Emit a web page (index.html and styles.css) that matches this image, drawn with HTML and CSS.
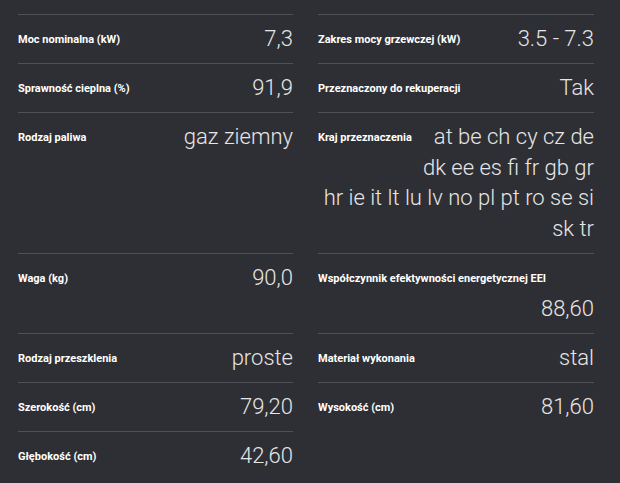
FILE: index.html
```html
<!DOCTYPE html>
<html lang="pl">
<head>
<meta charset="utf-8">
<title>Parametry</title>
<link rel="stylesheet" href="styles.css">
</head>
<body>
<div class="specs">
  <div class="row"><span class="label">Moc nominalna (kW)</span><div class="value">7,3</div></div>
  <div class="row"><span class="label">Zakres mocy grzewczej (kW)</span><div class="value">3.5 - 7.3</div></div>
  <div class="row"><span class="label">Sprawność cieplna (%)</span><div class="value">91,9</div></div>
  <div class="row"><span class="label">Przeznaczony do rekuperacji</span><div class="value">Tak</div></div>
  <div class="row"><span class="label">Rodzaj paliwa</span><div class="value">gaz ziemny</div></div>
  <div class="row"><span class="label">Kraj przeznaczenia</span><div class="value">at be ch cy cz de dk ee es fi fr gb gr hr ie it lt lu lv no pl pt ro se si sk tr</div></div>
  <div class="row"><span class="label">Waga (kg)</span><div class="value">90,0</div></div>
  <div class="row"><span class="label">Współczynnik efektywności energetycznej EEI</span><div class="value">88,60</div></div>
  <div class="row"><span class="label">Rodzaj przeszklenia</span><div class="value">proste</div></div>
  <div class="row"><span class="label">Materiał wykonania</span><div class="value">stal</div></div>
  <div class="row"><span class="label">Szerokość (cm)</span><div class="value">79,20</div></div>
  <div class="row"><span class="label">Wysokość (cm)</span><div class="value">81,60</div></div>
  <div class="row"><span class="label">Głębokość (cm)</span><div class="value">42,60</div></div>
</div>
</body>
</html>
```
FILE: styles.css
```css
html, body {
  margin: 0;
  padding: 0;
  background: #2e2f34;
}
body {
  padding: 14px 0 0 18px;
  font-family: Roboto, "Liberation Sans", sans-serif;
  height: 483px;
  box-sizing: border-box;
  overflow: hidden;
}
.specs {
  display: grid;
  grid-template-columns: 275px 276px;
  column-gap: 25px;
}
.row {
  display: flow-root;
  border-top: 1px solid #505156;
  padding: 9px 0 8px;
}
.label {
  float: left;
  line-height: 31px;
  margin-right: 8px;
  font-size: 11px;
  font-weight: 700;
  color: #ffffff;
}
.value {
  text-align: right;
  font-size: 22px;
  font-weight: 300;
  line-height: 30.7px;
  color: #e6e6e6;
}
```
